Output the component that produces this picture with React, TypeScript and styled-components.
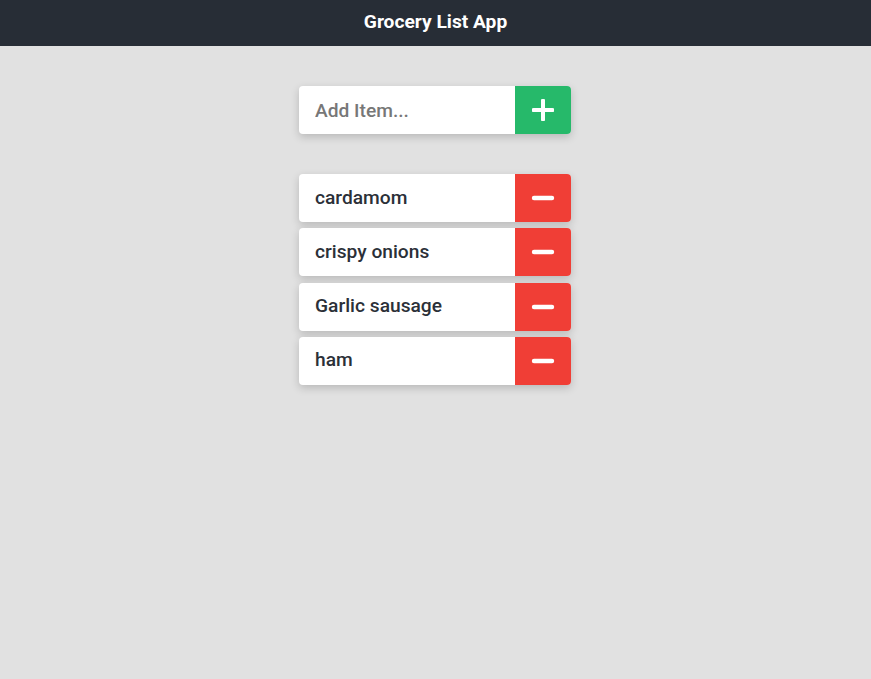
import * as React from 'react';
import styled, { createGlobalStyle } from 'styled-components';

const GlobalStyle = createGlobalStyle`
  html, body {
    margin: 0;
    padding: 0;
    background-color: #e1e1e1;
    font-family: Roboto, 'Noto Sans', sans-serif;
  }
  * {
    box-sizing: border-box;
  }
`;

const Page = styled.div`
  min-height: 679px;
  background-color: #e1e1e1;
`;

const Header = styled.header`
  display: flex;
  justify-content: center;
  align-items: center;
  height: 46px;
  padding-bottom: 3px;
  background-color: #272d36;
  color: #ffffff;
  font-size: 19.2px;
  font-weight: 700;
`;

const Main = styled.main`
  display: flex;
  flex-direction: column;
  align-items: center;
  padding-top: 40px;
  padding-right: 1px;
`;

const Card = styled.div<{ $gap?: number }>`
  display: flex;
  width: 272px;
  height: 48px;
  margin-bottom: ${(p) => (p.$gap !== undefined ? p.$gap : 6.33)}px;
  background-color: #ffffff;
  border-radius: 4px;
  overflow: hidden;
  box-shadow: 0 3px 8px rgba(0, 0, 0, 0.18);
`;

const Input = styled.input`
  flex: 1;
  min-width: 0;
  border: none;
  outline: none;
  padding: 0 16px;
  font-family: Roboto, 'Noto Sans', sans-serif;
  font-size: 19.2px;
  font-weight: 500;
  color: #2b3038;
  background: transparent;

  &::placeholder {
    color: #777777;
  }
`;

const Label = styled.div`
  flex: 1;
  display: flex;
  align-items: center;
  padding: 0 16px 2px;
  font-size: 19.2px;
  font-weight: 500;
  color: #2b3038;
`;

const ActionButton = styled.button<{ $variant: 'add' | 'remove' }>`
  display: flex;
  justify-content: center;
  align-items: center;
  width: 56px;
  height: 100%;
  border: none;
  padding: 0;
  cursor: pointer;
  background-color: ${(p) => (p.$variant === 'add' ? '#26b96a' : '#f03e36')};
`;

const List = styled.div`
  display: flex;
  flex-direction: column;
`;

const PlusIcon = () => (
  <svg width='22' height='22' viewBox='0 0 22 22'>
    <path d='M11 1.5v19M1.5 11h19' stroke='#ffffff' strokeWidth='4' strokeLinecap='round' />
  </svg>
);

const MinusIcon = () => (
  <svg width='24' height='6' viewBox='0 0 24 6'>
    <path d='M3 3h18' stroke='#ffffff' strokeWidth='4.4' strokeLinecap='round' />
  </svg>
);

const items = ['cardamom', 'crispy onions', 'Garlic sausage', 'ham'];

export default function App() {
  return (
    <Page>
      <GlobalStyle />
      <Header>Grocery List App</Header>
      <Main>
        <Card $gap={40}>
          <Input placeholder='Add Item...' />
          <ActionButton $variant='add'>
            <PlusIcon />
          </ActionButton>
        </Card>
        <List>
          {items.map((item) => (
            <Card key={item}>
              <Label>{item}</Label>
              <ActionButton $variant='remove'>
                <MinusIcon />
              </ActionButton>
            </Card>
          ))}
        </List>
      </Main>
    </Page>
  );
}
